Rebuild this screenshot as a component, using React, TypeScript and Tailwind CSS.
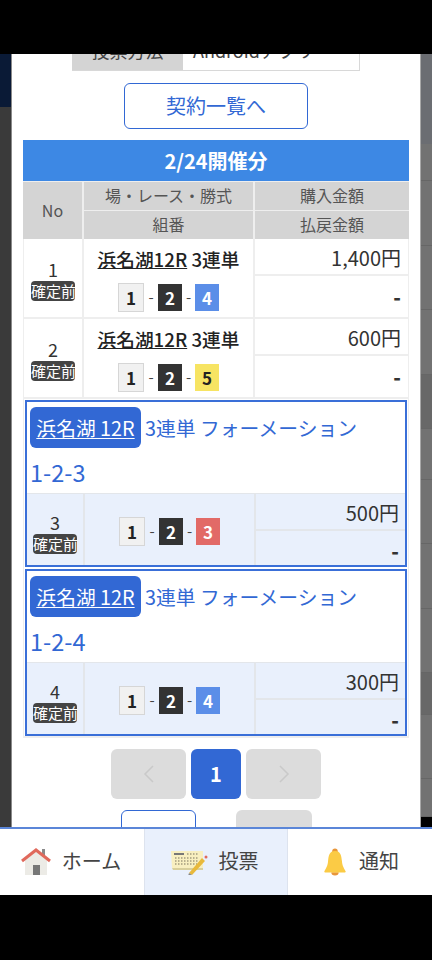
const font = { fontFamily: '"Noto Sans CJK JP", "Noto Sans", sans-serif' };

const sideLines = [
  { h: 37, dark: false },
  { h: 65, dark: false },
  { h: 64, dark: false },
  { h: 65, dark: false },
  { h: 54, dark: true },
  { h: 51, dark: false },
  { h: 64, dark: false },
  { h: 65, dark: false },
  { h: 64, dark: false },
  { h: 42, dark: true },
  { h: 64, dark: false },
  { h: 38, dark: false },
];

function Badge() {
  return (
    <span className="block w-[44px] h-[20px] mx-auto rounded-[4px] bg-[#444444] text-white text-[15px] leading-[20px] whitespace-nowrap text-center">
      確定前
    </span>
  );
}

function NumBox({ n, color }: { n: number; color: string }) {
  return (
    <span className={`flex items-center justify-center w-[24px] h-[27px] text-[17px] font-bold ${color}`}>
      {n}
    </span>
  );
}

function Combo({ last, lastColor }: { last: number; lastColor: string }) {
  return (
    <div className="flex items-center justify-center gap-[2px] text-[#444444] text-[15px]">
      <span className="flex items-center justify-center w-[26px] h-[29px] bg-[#f1f1f1] border border-[#d6d6d6] text-[#222222] text-[17px] font-bold">
        1
      </span>
      <span className="w-[10px] text-center">-</span>
      <NumBox n={2} color="bg-[#333333] text-white" />
      <span className="w-[9px] text-center">-</span>
      <NumBox n={last} color={lastColor} />
    </div>
  );
}

function Row({
  no,
  last,
  lastColor,
  amount,
}: {
  no: number;
  last: number;
  lastColor: string;
  amount: string;
}) {
  return (
    <div className="grid grid-cols-[60px_171px_1fr] border-b-2 border-[#eeeeee] h-[80px]">
      <div className="flex flex-col justify-center border-r-2 border-[#eeeeee] text-center text-[#333333] text-[18px] leading-[24px] pt-[2px]">
        {no}
        <Badge />
      </div>
      <div className="flex flex-col items-center border-r-2 border-[#eeeeee] pt-[5px]">
        <div className="text-[18.7px] leading-[30px] font-medium text-[#222222] whitespace-nowrap">
          <span className="underline">浜名湖12R</span> 3連単
        </div>
        <div className="mt-[9px]">
          <Combo last={last} lastColor={lastColor} />
        </div>
      </div>
      <div className="flex flex-col">
        <div className="h-[37px] border-b-2 border-[#eeeeee] px-[7px] text-right text-[20px] leading-[38px] text-[#333333]">
          {amount}
        </div>
        <div className="h-[41px] px-[7px] text-right text-[20px] font-black leading-[41px] text-[#333333]">-</div>
      </div>
    </div>
  );
}

function Card({
  no,
  combo,
  last,
  lastColor,
  amount,
}: {
  no: number;
  combo: string;
  last: number;
  lastColor: string;
  amount: string;
}) {
  return (
    <div className="mx-[1px] border-2 border-[#3a6fd8] text-[#3268d4]">
      <div className="h-[91px] px-[3px] pt-[5px]">
        <div className="flex items-center h-[41px] text-[19.8px] whitespace-nowrap">
          <span className="flex items-center h-[41px] w-[111px] justify-center rounded-[6px] bg-[#3268d4] text-white underline underline-offset-2">
            浜名湖 12R
          </span>
          <span className="ml-[4px]">3連単 フォーメーション</span>
        </div>
        <div className="text-[23.5px] leading-[34px] mt-[7px]">{combo}</div>
      </div>
      <div className="grid grid-cols-[58px_171px_1fr] h-[72px] bg-[#e9f0fc] border-t border-[#e3e6ea]">
        <div className="flex flex-col justify-center border-r-2 border-[#e3e6ea] text-center text-[#333333] text-[18px] leading-[24px] pt-[4px]">
          {no}
          <Badge />
        </div>
        <div className="flex items-center justify-center border-r-2 border-[#e3e6ea] pt-[4px]">
          <Combo last={last} lastColor={lastColor} />
        </div>
        <div className="flex flex-col">
          <div className="h-[37px] border-b-2 border-[#e3e6ea] px-[6px] text-right text-[20px] leading-[38px] text-[#333333]">
            {amount}
          </div>
          <div className="h-[34px] px-[6px] text-right text-[20px] font-black leading-[40px] text-[#333333]">-</div>
        </div>
      </div>
    </div>
  );
}

function HomeIcon() {
  return (
    <svg width="30" height="28" viewBox="0 0 30 28">
      <rect x="21" y="1" width="3" height="8" fill="#8a8a8a" />
      <path d="M4 12 L15 3 L26 12 V27 H4 Z" fill="#ecebe6" />
      <rect x="12" y="17" width="7" height="10" fill="#777777" />
      <path d="M1 13 L15 2 L29 13" fill="none" stroke="#e0695c" strokeWidth="3" />
    </svg>
  );
}

function TicketIcon() {
  return (
    <svg width="38" height="26" viewBox="0 0 38 26">
      <path d="M1 2 H33 V19 H2 Z" fill="#f8efc0" />
      <path d="M2 19 H33 V21 H3 Z" fill="#d8cf9c" />
      <rect x="4" y="4" width="10" height="2" fill="#777777" />
      <path d="M17 5h12M5 9h24M5 12h24M5 15h22" stroke="#a39c7e" strokeWidth="1.6" strokeDasharray="1.5 1.5" />
      <path d="M19 24 L32 9 L35 12 L22 26 Z" fill="#e8b93c" />
      <path d="M19 24 L18 27 L22 26 Z" fill="#888888" />
      <circle cx="36" cy="8" r="1.5" fill="#e0695c" />
    </svg>
  );
}

function BellIcon() {
  return (
    <svg width="24" height="30" viewBox="0 0 26 30">
      <circle cx="13" cy="3.5" r="3" fill="#e8963a" />
      <path d="M9 26 a4 3.5 0 0 0 8 0 Z" fill="#e8963a" />
      <path d="M13 3 C7 3 6 8 5.5 14 C5 20 3 22 1.5 25 C1 26 2 26.5 3 26.5 H23 C24 26.5 25 26 24.5 25 C23 22 21 20 20.5 14 C20 8 19 3 13 3 Z" fill="#fbcb45" />
    </svg>
  );
}

export default function App() {
  return (
    <div className="w-[432px] h-[960px] bg-black flex flex-col overflow-hidden" style={font}>
      <div className="h-[54px] shrink-0" />
      <div className="h-[773px] shrink-0 flex overflow-hidden">
        <div className="w-[12px] shrink-0 flex flex-col border-r border-[#8a8a8a]">
          <div className="h-[53px] bg-[#0a1a36]" />
          <div className="flex-1 bg-[#3a3a3a]" />
        </div>

        <div className="flex-1 bg-white px-[11px] overflow-hidden">
          <div className="mx-[49px] -mt-[19px] h-[36px] grid grid-cols-[111px_1fr] border-b border-r border-[#d8d8d8] text-[18px] leading-[30px] text-[#444444]">
            <div className="bg-[#d4d4d4] text-center">投票方法</div>
            <div className="px-[10px]">Androidアプリ</div>
          </div>

          <div className="mt-[12px] mx-auto flex items-center justify-center w-[184px] h-[46px] rounded-[6px] border border-[#3268d4] text-[#3268d4] text-[20px]">
            契約一覧へ
          </div>

          <div className="mt-[11px] border-x border-[#eeeeee] border-b-2">
            <div className="-mx-[1px] h-[41px] bg-[#3d88e4] text-center text-white text-[20px] font-bold leading-[41px]">
              2/24開催分
            </div>
            <div className="-mx-[1px] grid grid-cols-[61px_171px_1fr] h-[58px] bg-[#d4d4d4] text-[#555555] text-[16px] text-center">
              <div className="flex items-center justify-center border-r-2 border-t border-[#eeeeee] pb-[2px]">No</div>
              <div className="flex flex-col border-r-2 border-[#eeeeee]">
                <div className="flex-1 border-t border-b border-[#eeeeee] leading-[26px]">場・レース・勝式</div>
                <div className="flex-1 leading-[27px]">組番</div>
              </div>
              <div className="flex flex-col">
                <div className="flex-1 border-t border-b border-[#eeeeee] leading-[26px]">購入金額</div>
                <div className="flex-1 leading-[27px]">払戻金額</div>
              </div>
            </div>
            <Row no={1} last={4} lastColor="bg-[#5b8ee8] text-white" amount="1,400円" />
            <Row no={2} last={5} lastColor="bg-[#f7e463] text-[#222222]" amount="600円" />
            <div className="flex flex-col gap-[2px] pt-[1px]">
              <Card no={3} combo="1-2-3" last={3} lastColor="bg-[#e26a67] text-white" amount="500円" />
              <Card no={4} combo="1-2-4" last={4} lastColor="bg-[#5b8ee8] text-white" amount="300円" />
            </div>
          </div>

          <div className="mt-[11px] flex justify-center gap-[5px] text-[#c9c9c9]">
            <div className="flex items-center justify-center w-[75px] h-[50px] rounded-[6px] bg-[#dcdcdc]">
              <svg width="12" height="18" viewBox="0 0 12 18" fill="none" stroke="currentColor" strokeWidth="1.5">
                <path d="M10 1 L2 9 L10 17" />
              </svg>
            </div>
            <div className="flex items-center justify-center w-[50px] h-[50px] rounded-[6px] bg-[#3268d4] text-white text-[20px] font-bold">
              1
            </div>
            <div className="flex items-center justify-center w-[75px] h-[50px] rounded-[6px] bg-[#dcdcdc]">
              <svg width="12" height="18" viewBox="0 0 12 18" fill="none" stroke="currentColor" strokeWidth="1.5">
                <path d="M2 1 L10 9 L2 17" />
              </svg>
            </div>
          </div>

          <div className="mt-[11px] ml-[98px] flex gap-[40px]">
            <div className="w-[75px] h-[40px] rounded-[6px] border border-[#3268d4] bg-white" />
            <div className="w-[76px] h-[40px] rounded-[6px] bg-[#dcdcdc]" />
          </div>
        </div>

        <div className="w-[12px] shrink-0 flex flex-col border-l border-[#a8a8a8]">
          <div className="h-[90px] bg-[#6b6d72]" />
          {sideLines.map((s, i) => (
            <div
              key={i}
              className={`shrink-0 border-b border-[#666666] ${s.dark ? 'bg-[#686868]' : 'bg-[#727272]'}`}
              style={{ height: s.h }}
            />
          ))}
        </div>
      </div>

      <div className="h-[68px] shrink-0 grid grid-cols-[144px_144px_1fr] bg-white border-t-2 border-[#5b86d8] text-[#444444] text-[20px] leading-[28px]">
        <div className="flex items-center justify-center gap-[11px] pr-[2px]">
          <HomeIcon />
          <span className="-mt-[3px]">ホーム</span>
        </div>
        <div className="flex items-center justify-center gap-[11px] bg-[#e9f0fc] border-x border-[#dde3ee] pr-[4px]">
          <TicketIcon />
          <span className="-mt-[3px]">投票</span>
        </div>
        <div className="flex items-center justify-center gap-[12px] pl-[2px]">
          <BellIcon />
          <span className="-mt-[3px]">通知</span>
        </div>
      </div>
    </div>
  );
}
